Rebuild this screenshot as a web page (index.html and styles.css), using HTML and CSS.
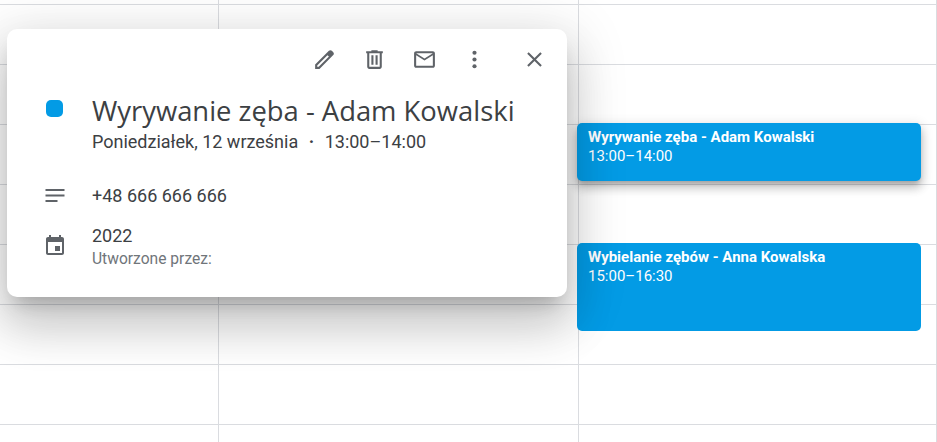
FILE: index.html
```html
<!DOCTYPE html>
<html lang="pl">
<head>
<meta charset="utf-8">
<title>Wyrywanie zęba</title>
<link rel="stylesheet" href="styles.css">
</head>
<body>
<main class="calendar">
  <div class="grid">
    <i></i><i></i><i></i><i></i><i></i><i></i><i></i><i></i><i></i>
    <i></i><i></i><i></i><i></i><i></i><i></i><i></i><i></i><i></i>
    <i></i><i></i><i></i><i></i><i></i><i></i><i></i><i></i><i></i>
  </div>
  <div class="event event-first">
    <div class="event-title">Wyrywanie zęba - Adam Kowalski</div>
    <div class="event-time">13:00–14:00</div>
  </div>
  <div class="event event-second">
    <div class="event-title">Wybielanie zębów - Anna Kowalska</div>
    <div class="event-time">15:00–16:30</div>
  </div>
  <section class="popup">
    <div class="toolbar">
      <svg class="tool" viewBox="0 0 24 24"><path d="M20.41 4.94l-1.35-1.35c-.78-.78-2.05-.78-2.83 0L3 16.82V21h4.18L20.41 7.77c.79-.78.79-2.05 0-2.83zm-14 14.12L5 19v-1.36l9.82-9.82 1.41 1.41-9.82 9.83z"/></svg>
      <svg class="tool" viewBox="0 0 24 24"><path d="M15 4V3H9v1H4v2h1v13c0 1.1.9 2 2 2h10c1.1 0 2-.9 2-2V6h1V4h-5zm2 15H7V6h10v13z"/><path d="M9 8h2v9H9zm4 0h2v9h-2z"/></svg>
      <svg class="tool" viewBox="0 0 24 24"><path d="M20 4H4c-1.1 0-2 .9-2 2v12c0 1.1.9 2 2 2h16c1.1 0 2-.9 2-2V6c0-1.1-.9-2-2-2zm0 14H4V8l8 5 8-5v10zm-8-7L4 6h16l-8 5z"/></svg>
      <svg class="tool" viewBox="0 0 24 24"><circle cx="12" cy="5.5" r="2"/><circle cx="12" cy="12" r="2"/><circle cx="12" cy="18.5" r="2"/></svg>
      <svg class="tool tool-close" viewBox="0 0 24 24"><path d="M19 6.41L17.59 5 12 10.59 6.41 5 5 6.41 10.59 12 5 17.59 6.41 19 12 13.41 17.59 19 19 17.59 13.41 12z"/></svg>
    </div>
    <div class="row row-head">
      <div class="icon-col"><span class="swatch"></span></div>
      <div>
        <h1 class="title">Wyrywanie zęba - Adam Kowalski</h1>
        <p class="when">Poniedziałek, 12 września<span class="dot">·</span>13:00–14:00</p>
      </div>
    </div>
    <div class="row row-desc">
      <div class="icon-col"><svg class="icon" viewBox="0 0 24 24"><path d="M2.500 5h19v2h-19zM2.500 10.500h19v2h-19zM2.500 16h12v2h-12z"/></svg></div>
      <p class="text">+48 666 666 666</p>
    </div>
    <div class="row row-cal">
      <div class="icon-col"><svg class="icon" viewBox="0 0 24 24"><path d="M17 12h-5v5h5v-5zM16 1v2H8V1H6v2H5c-1.110 0-1.990.9-1.990 2L3 19c0 1.100.89 2 2 2h14c1.100 0 2-.9 2-2V5c0-1.100-.9-2-2-2h-1V1h-2zm3 18H5V8h14v11z"/></svg></div>
      <div>
        <p class="text">2022</p>
        <p class="small">Utworzone przez:</p>
      </div>
    </div>
  </section>
</main>
</body>
</html>
```
FILE: styles.css
```css
* { box-sizing: border-box; }
html, body { margin: 0; height: 100%; overflow: hidden; background: #fff; }
body { font-family: Roboto, "Liberation Sans", sans-serif; color: #3c4043; }

.calendar { position: relative; width: 937px; height: 442px; overflow: hidden; }

.grid {
  display: grid;
  grid-template-columns: 219px 360px 358px;
  grid-template-rows: 5px repeat(8, 60px);
}
.grid i { border-right: 1px solid #dadce0; border-bottom: 1px solid #dadce0; }

.event {
  position: absolute;
  left: 577px;
  width: 344px;
  padding: 5px 11px;
  background: #039be5;
  border-radius: 5px;
  color: #fff;
  font-size: 15px;
  line-height: 19px;
}
.event-first {
  top: 123px;
  height: 58px;
  box-shadow: 0 7px 10px 1px rgba(0,0,0,.14), 0 3px 12px 2px rgba(0,0,0,.12), 0 4px 5px -2px rgba(0,0,0,.2);
}
.event-second { top: 243px; height: 88px; }
.event-title { font-weight: 700; }

.popup {
  position: absolute;
  left: 7px;
  top: 29px;
  width: 560px;
  height: 268px;
  background: #fff;
  border-radius: 10px;
  box-shadow: 0 29px 46px 4px rgba(0,0,0,.14), 0 11px 55px 10px rgba(0,0,0,.12), 0 13px 18px -8px rgba(0,0,0,.2);
}

.toolbar {
  display: flex;
  justify-content: flex-end;
  align-items: center;
  gap: 25px;
  padding: 18px 20px 0 0;
}
.tool { width: 25px; height: 25px; fill: #5f6368; display: block; }
.tool-close { margin-left: 10px; }

.row { display: flex; }
.icon-col { flex: 0 0 85px; padding-left: 35.500px; }
.icon { display: block; width: 24px; height: 24px; fill: #5f6368; }

.row-head { margin-top: 22px; }
.swatch { display: block; width: 17px; height: 17px; margin: 6px 0 0 3.500px; background: #039be5; border-radius: 5px; }
.title { margin: 0; font-family: "Open Sans", sans-serif; font-size: 27.4px; font-weight: 400; line-height: 34px; }
.when { margin: 3px 0 0; font-size: 18px; line-height: 22px; }
.dot { margin: 0 10.500px; font-weight: 700; }

.row-desc { margin-top: 31px; align-items: center; }
.row-cal { margin-top: 16px; }
.row-cal .icon-col { padding-top: 10px; }
.text { margin: 0; font-size: 18px; line-height: 24px; }
.small { margin: 2px 0 0; font-size: 15.6px; line-height: 18px; color: #70757a; }
```
